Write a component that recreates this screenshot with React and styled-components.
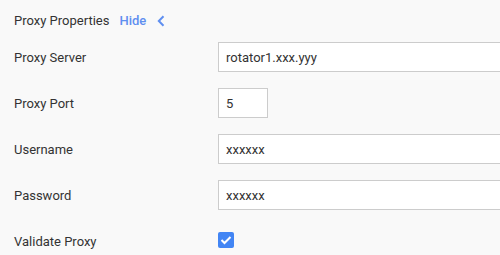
import styled, { createGlobalStyle } from "styled-components";

const GlobalStyle = createGlobalStyle`
  html, body {
    margin: 0;
    padding: 0;
    background: #f9f9f9;
    overflow: hidden;
  }
  body {
    font-family: Roboto, "Liberation Sans", sans-serif;
    font-size: 13px;
    color: #333;
  }
`;

const fields = [
  { label: "Proxy Server", value: "rotator1.xxx.yyy", width: "282px" },
  { label: "Proxy Port", value: "5", width: "50px" },
  { label: "Username", value: "xxxxxx", width: "282px" },
  { label: "Password", value: "xxxxxx", width: "282px" },
];

export default function App() {
  return (
    <Page>
      <GlobalStyle />
      <Header>
        <Title>Proxy Properties</Title>
        <HideLink>
          Hide
          <svg width="8" height="12" viewBox="0 0 8 12">
            <path d="M6.5 1.2 L1.8 6 L6.5 10.8" fill="none" stroke="#5f8ff0" strokeWidth="2" />
          </svg>
        </HideLink>
      </Header>
      <Form>
        {fields.map((f) => (
          <Row key={f.label}>
            <Label>{f.label}</Label>
            <Input $width={f.width} defaultValue={f.value} />
          </Row>
        ))}
        <Row>
          <Label>Validate Proxy</Label>
          <Check>
            <svg width="12" height="10" viewBox="0 0 12 10">
              <path d="M1.5 5 L4.5 8 L10.5 2" fill="none" stroke="#fff" strokeWidth="2" />
            </svg>
          </Check>
        </Row>
      </Form>
    </Page>
  );
}

const Page = styled.div`
  padding: 11px 0 0 14px;
  width: 500px;
  height: 255px;
  box-sizing: border-box;
`;

const Header = styled.div`
  display: flex;
  align-items: center;
  height: 18px;
  gap: 10px;
`;

const Title = styled.span`
  color: #333;
`;

const HideLink = styled.span`
  display: flex;
  align-items: center;
  gap: 11px;
  color: #5f8ff0;
  font-weight: 500;
  svg {
    margin-top: 1px;
  }
`;

const Form = styled.div`
  display: flex;
  flex-direction: column;
  gap: 16px;
  margin-top: 13px;
`;

const Row = styled.div`
  display: grid;
  grid-template-columns: 204px auto;
  align-items: center;
  height: 30px;
`;

const Label = styled.label`
  color: #333;
`;

const Input = styled.input`
  box-sizing: border-box;
  width: ${(p) => p.$width};
  height: 30px;
  border: 1px solid #ccc;
  border-right: ${(p) => (p.$width === "50px" ? "1px solid #ccc" : "none")};
  background: #fff;
  padding: 0 7px;
  font-family: Roboto, "Liberation Sans", sans-serif;
  font-size: 13px;
  color: #333;
  outline: none;
`;

const Check = styled.span`
  display: flex;
  align-items: center;
  justify-content: center;
  width: 16px;
  height: 16px;
  border-radius: 2px;
  background: #4285f4;
  margin-top: -2px;
`;
